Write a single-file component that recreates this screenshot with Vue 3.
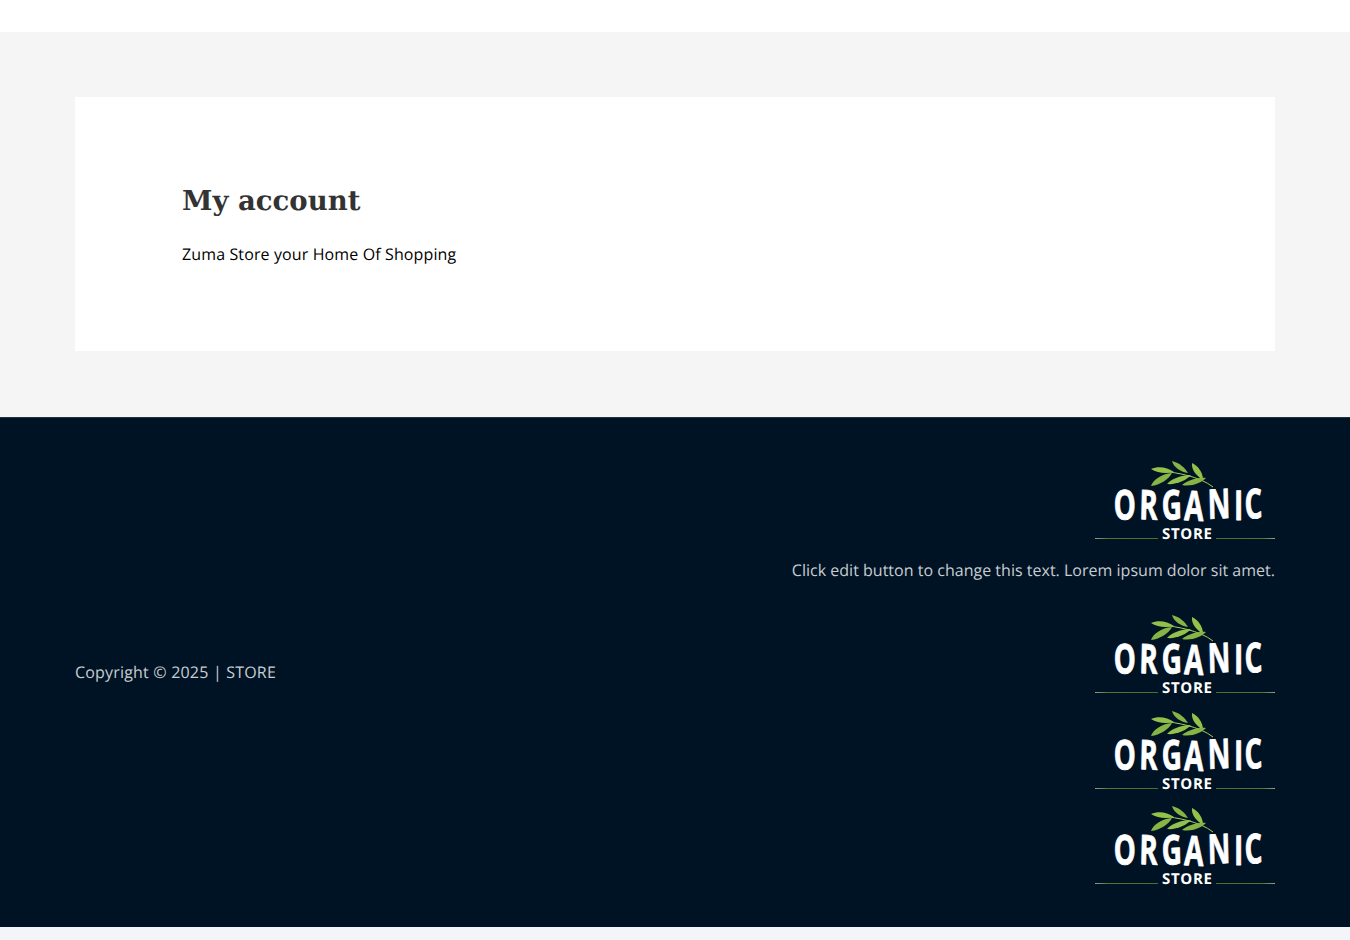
<template>
  <div class="page">
    <header class="top"></header>

    <main class="content">
      <section class="card">
        <h1>My account</h1>
        <p>Zuma Store your Home Of Shopping</p>
      </section>
    </main>

    <footer class="footer">
      <div class="about">
        <svg class="logo" viewBox="0 0 180 80" width="180" height="80">
          <use href="#organic-logo" />
        </svg>
        <p>Click edit button to change this text. Lorem ipsum dolor sit amet.</p>
      </div>

      <div class="bottom">
        <p class="copyright">Copyright © 2025 | STORE</p>
        <div class="logos">
          <svg v-for="n in 3" :key="n" class="logo" viewBox="0 0 180 80" width="180" height="80">
            <use href="#organic-logo" />
          </svg>
        </div>
      </div>
    </footer>
    <div class="strip"></div>

    <!-- logo drawn once, reused above -->
    <svg class="defs" width="0" height="0">
      <defs>
        <linearGradient id="line-left" x1="0" x2="1" y1="0" y2="0">
          <stop offset="0" stop-color="#8f9f8c" />
          <stop offset="0.2" stop-color="#4f7536" />
          <stop offset="1" stop-color="#48702f" />
        </linearGradient>
        <linearGradient id="line-right" x1="0" x2="1" y1="0" y2="0">
          <stop offset="0" stop-color="#48702f" />
          <stop offset="0.8" stop-color="#4f7536" />
          <stop offset="1" stop-color="#8f9f8c" />
        </linearGradient>
        <g id="organic-logo">
          <path d="M68 11 C82 13 104 16 118 27" fill="none" stroke="#a5cd5a" stroke-width="1" />
          <path v-for="(leaf, i) in leaves" :key="i" :d="leaf" :fill="i % 2 ? '#86b545' : '#93c24b'" />
          <g transform="translate(0 60) scale(0.68 1)">
            <text class="logo-word" :x="wordX" y="0" dy="0 -1 1 0 -1 1 -1" rotate="-2 2 -2 2 -2 0 -3">ORGANIC</text>
          </g>
          <text class="logo-store" x="67" y="79" textLength="50" lengthAdjust="spacing">STORE</text>
          <rect x="0" y="78" width="63" height="1" fill="url(#line-left)" />
          <rect x="121" y="78" width="59" height="1" fill="url(#line-right)" />
        </g>
      </defs>
    </svg>
  </div>
</template>

<script setup>
// leaves of the sprig, left to right
const leaves = [
  'M56 9 C63 6 72 7 79 12 C71 14 62 13 56 9 Z',
  'M77 1 C85 3 90 8 93 13 C86 12 79 8 77 1 Z',
  'M97 3 C103 6 108 12 108 20 C102 16 96 10 97 3 Z',
  'M56 26 C58 20 66 14 77 13 C74 19 65 25 56 26 Z',
  'M72 24 C76 19 86 15 96 15 C92 20 81 25 72 24 Z',
  'M87 25 C92 21 102 17 111 18 C106 23 96 27 87 25 Z'
]
// letter starts, divided by the horizontal squeeze of the word
const wordX = [19, 44, 67, 89, 113, 139, 150].map(x => (x / 0.68).toFixed(1)).join(' ')
</script>

<style>
body {
  margin: 0;
  background: #f5f5f5;
}
</style>

<style scoped>
.page {
  font-family: "Open Sans", sans-serif;
  font-size: 16px;
  line-height: 26px;
  text-rendering: geometricPrecision;
}
.top {
  height: 32px;
  background: #fff;
}
.content {
  background: #f5f5f5;
  padding: 65px 75px 66px;
}
.card {
  height: 254px;
  box-sizing: border-box;
  background: #fff;
  padding: 84px 107px 0;
}
h1 {
  margin: 0 0 20px;
  font-family: "DejaVu Serif", "Liberation Serif", serif;
  font-size: 27.5px;
  line-height: 40px;
  font-weight: 700;
  color: #333;
}
.card p {
  margin: 0;
  color: #000;
  letter-spacing: 0.12px;
}
.footer {
  height: 510px;
  box-sizing: border-box;
  background: #001324;
  border-top: 1px solid #24323f;
  padding: 42px 75px 0;
  color: #c8cdd2;
}
.about {
  display: flex;
  flex-direction: column;
  align-items: flex-end;
}
.about p {
  margin: 17px 0 0;
  letter-spacing: 0.015px;
}
.bottom {
  display: flex;
  justify-content: space-between;
  margin-top: 31px;
}
.copyright {
  margin: 45px 0 0;
  letter-spacing: 0.19px;
}
.logos {
  display: flex;
  flex-direction: column;
  gap: 15px;
}
.logo {
  display: block;
}
.logos .logo:nth-child(2) {
  margin-top: 1px;
}
.logo-word {
  font-family: "Open Sans", sans-serif;
  font-weight: 700;
  font-size: 41px;
  fill: #fff;
  stroke: #fff;
  stroke-width: 0.8;
  stroke-linejoin: round;
}
.logo-store {
  font-family: "Open Sans", sans-serif;
  font-weight: 700;
  font-size: 15px;
  fill: #fff;
}
.strip {
  height: 13px;
  background: #f3f5f8;
}
.defs {
  position: absolute;
}
</style>
